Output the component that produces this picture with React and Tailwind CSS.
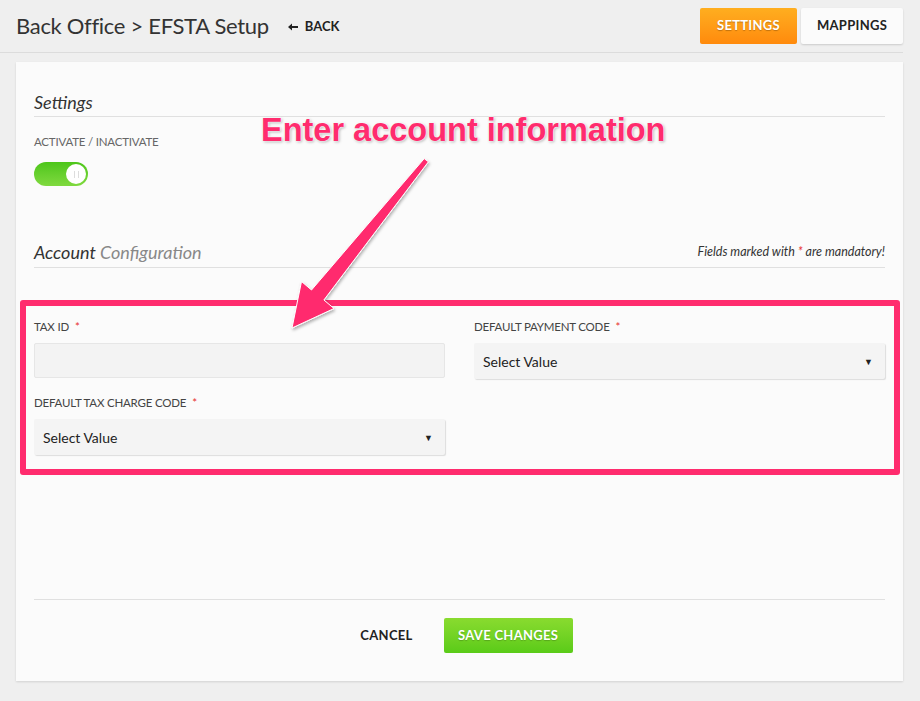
import React from "react";

function Caret() {
  return <span className="text-[9px] text-[#222] leading-none">▼</span>;
}

function Field({ label, children }) {
  return (
    <div className="flex flex-col">
      <div className="text-[11.5px] leading-4 text-[#444] uppercase tracking-[-0.2px] h-4 flex items-center">
        {label}
        <span className="text-[#e8312f] ml-[6px]">*</span>
      </div>
      <div className="mt-[8px]">{children}</div>
    </div>
  );
}

function SelectBox() {
  return (
    <div className="h-[36px] bg-[#f4f4f4] rounded-[2px] shadow-[1px_1px_1px_rgba(0,0,0,0.12)] flex items-center justify-between pl-[9px] pr-[12px]">
      <span className="text-[14px] text-[#222]">Select Value</span>
      <Caret />
    </div>
  );
}

export default function App() {
  return (
    <div
      className="min-h-[701px] w-[920px] bg-[#efefef] text-[#333]"
      style={{ fontFamily: "Lato, 'Noto Sans', sans-serif" }}
    >
      <div className="pr-[17px]">
        {/* Header */}
        <div className="h-[53px] border-b border-[#dcdcdc] flex items-center justify-between pl-4">
          <div className="flex items-center">
            <h1 className="text-[22px] tracking-[-0.3px] text-[#333] leading-none">Back Office &gt; EFSTA Setup</h1>
            <div className="ml-[19px] mt-[2px] flex items-center text-[13px] font-bold text-[#222]">
              <svg width="10" height="8" viewBox="0 0 10 8" className="mr-[7px]">
                <path d="M0 4 L4 0.5 L4 3 L10 3 L10 5 L4 5 L4 7.5 Z" fill="#222" />
              </svg>
              BACK
            </div>
          </div>
          <div className="flex items-center gap-[4px] -mt-[1px]">
            <button className="w-[97px] h-[36px] rounded-[2px] bg-gradient-to-b from-[#ffae1f] to-[#ff8a0c] text-white text-[13px] font-bold tracking-[0.3px] [text-shadow:0_1px_1px_rgba(0,0,0,0.25)]">
              SETTINGS
            </button>
            <button className="w-[102px] h-[36px] rounded-[2px] bg-[#fbfbfb] shadow-[0_1px_2px_rgba(0,0,0,0.15)] text-[#222] text-[13px] font-bold tracking-[0.3px]">
              MAPPINGS
            </button>
          </div>
        </div>

        {/* Card */}
        <div className="relative ml-4 mt-[9px] bg-[#fbfbfb] shadow-[0_1px_2px_rgba(0,0,0,0.12)] px-[18px] pt-[28px] pb-[28px]">
          <div className="border-b border-[#e0e0e0] pb-[2px]">
            <h2 className="italic text-[18px] leading-6 text-[#333]">Settings</h2>
          </div>
          <div className="mt-[17px] text-[11.5px] tracking-[-0.2px] leading-4 text-[#666] uppercase">Activate / Inactivate</div>
          <div className="mt-[12px] w-[54px] h-[24px] rounded-full bg-gradient-to-b from-[#4cc619] to-[#7fd93e] relative">
            <div className="absolute right-[2px] top-[2px] w-[20px] h-[20px] rounded-full bg-white flex items-center justify-center">
              <div className="w-[5px] h-[7px] border-x border-[#ddd]"></div>
            </div>
          </div>

          <div className="mt-[54px] border-b border-[#e0e0e0] pb-[3px] flex items-end justify-between">
            <h2 className="italic text-[18px] leading-6">
              <span className="text-[#333]">Account</span>{" "}
              <span className="text-[#888]">Configuration</span>
            </h2>
            <div className="italic text-[12.5px] text-[#333] pb-[2px]">
              Fields marked with <span className="text-[#e8312f]">*</span> are mandatory!
            </div>
          </div>

          <div className="mt-[51px] grid grid-cols-2 gap-x-[29px] gap-y-[16px]">
            <Field label="Tax ID">
              <div className="h-[35px] bg-[#f3f3f3] border border-[#e6e6e6] rounded-[2px]"></div>
            </Field>
            <Field label="Default Payment Code">
              <SelectBox />
            </Field>
            <Field label="Default Tax Charge Code">
              <SelectBox />
            </Field>
            <div></div>
          </div>

          <div className="mt-[144px] border-t border-[#e0e0e0] pt-[18px] flex items-center justify-center gap-[15px] pr-[2px]">
            <button className="px-4 h-[35px] text-[13px] font-bold text-[#222] tracking-[0.3px]">CANCEL</button>
            <button className="w-[129px] h-[35px] rounded-[2px] bg-gradient-to-b from-[#89db2f] to-[#5acb18] text-white text-[13px] font-bold tracking-[0.3px] [text-shadow:0_1px_1px_rgba(0,0,0,0.2)]">
              SAVE CHANGES
            </button>
          </div>

          {/* annotation box */}
          <div className="absolute left-[4px] top-[238px] w-[880px] h-[175px] border-[6px] border-[#ff2c6e] rounded-[3px] pointer-events-none"></div>
        </div>
      </div>

      {/* annotation text */}
      <div
        className="absolute left-[261px] top-[114px] text-[32.5px] font-bold text-[#ff2c6e] leading-none [text-shadow:0_0_2px_#fff,0_0_2px_#fff,1px_1px_3px_rgba(0,0,0,0.35)]"
        style={{ fontFamily: "'Liberation Sans', Arial, sans-serif" }}
      >
        Enter account information
      </div>
      {/* annotation arrow */}
      <svg className="absolute left-0 top-0 pointer-events-none" width="920" height="701">
        <defs>
          <filter id="sh" x="-20%" y="-20%" width="140%" height="140%">
            <feDropShadow dx="1" dy="2" stdDeviation="1.5" floodColor="#000" floodOpacity="0.3" />
          </filter>
        </defs>
        <polygon
          points="424.2,158.6 428.4,161.8 323.9,300 334,308.5 292,328 301.5,281.5 311.5,290"
          fill="#ff2c6e"
          stroke="#fff"
          strokeWidth="1"
          strokeLinejoin="round"
          filter="url(#sh)"
        />
      </svg>
    </div>
  );
}
